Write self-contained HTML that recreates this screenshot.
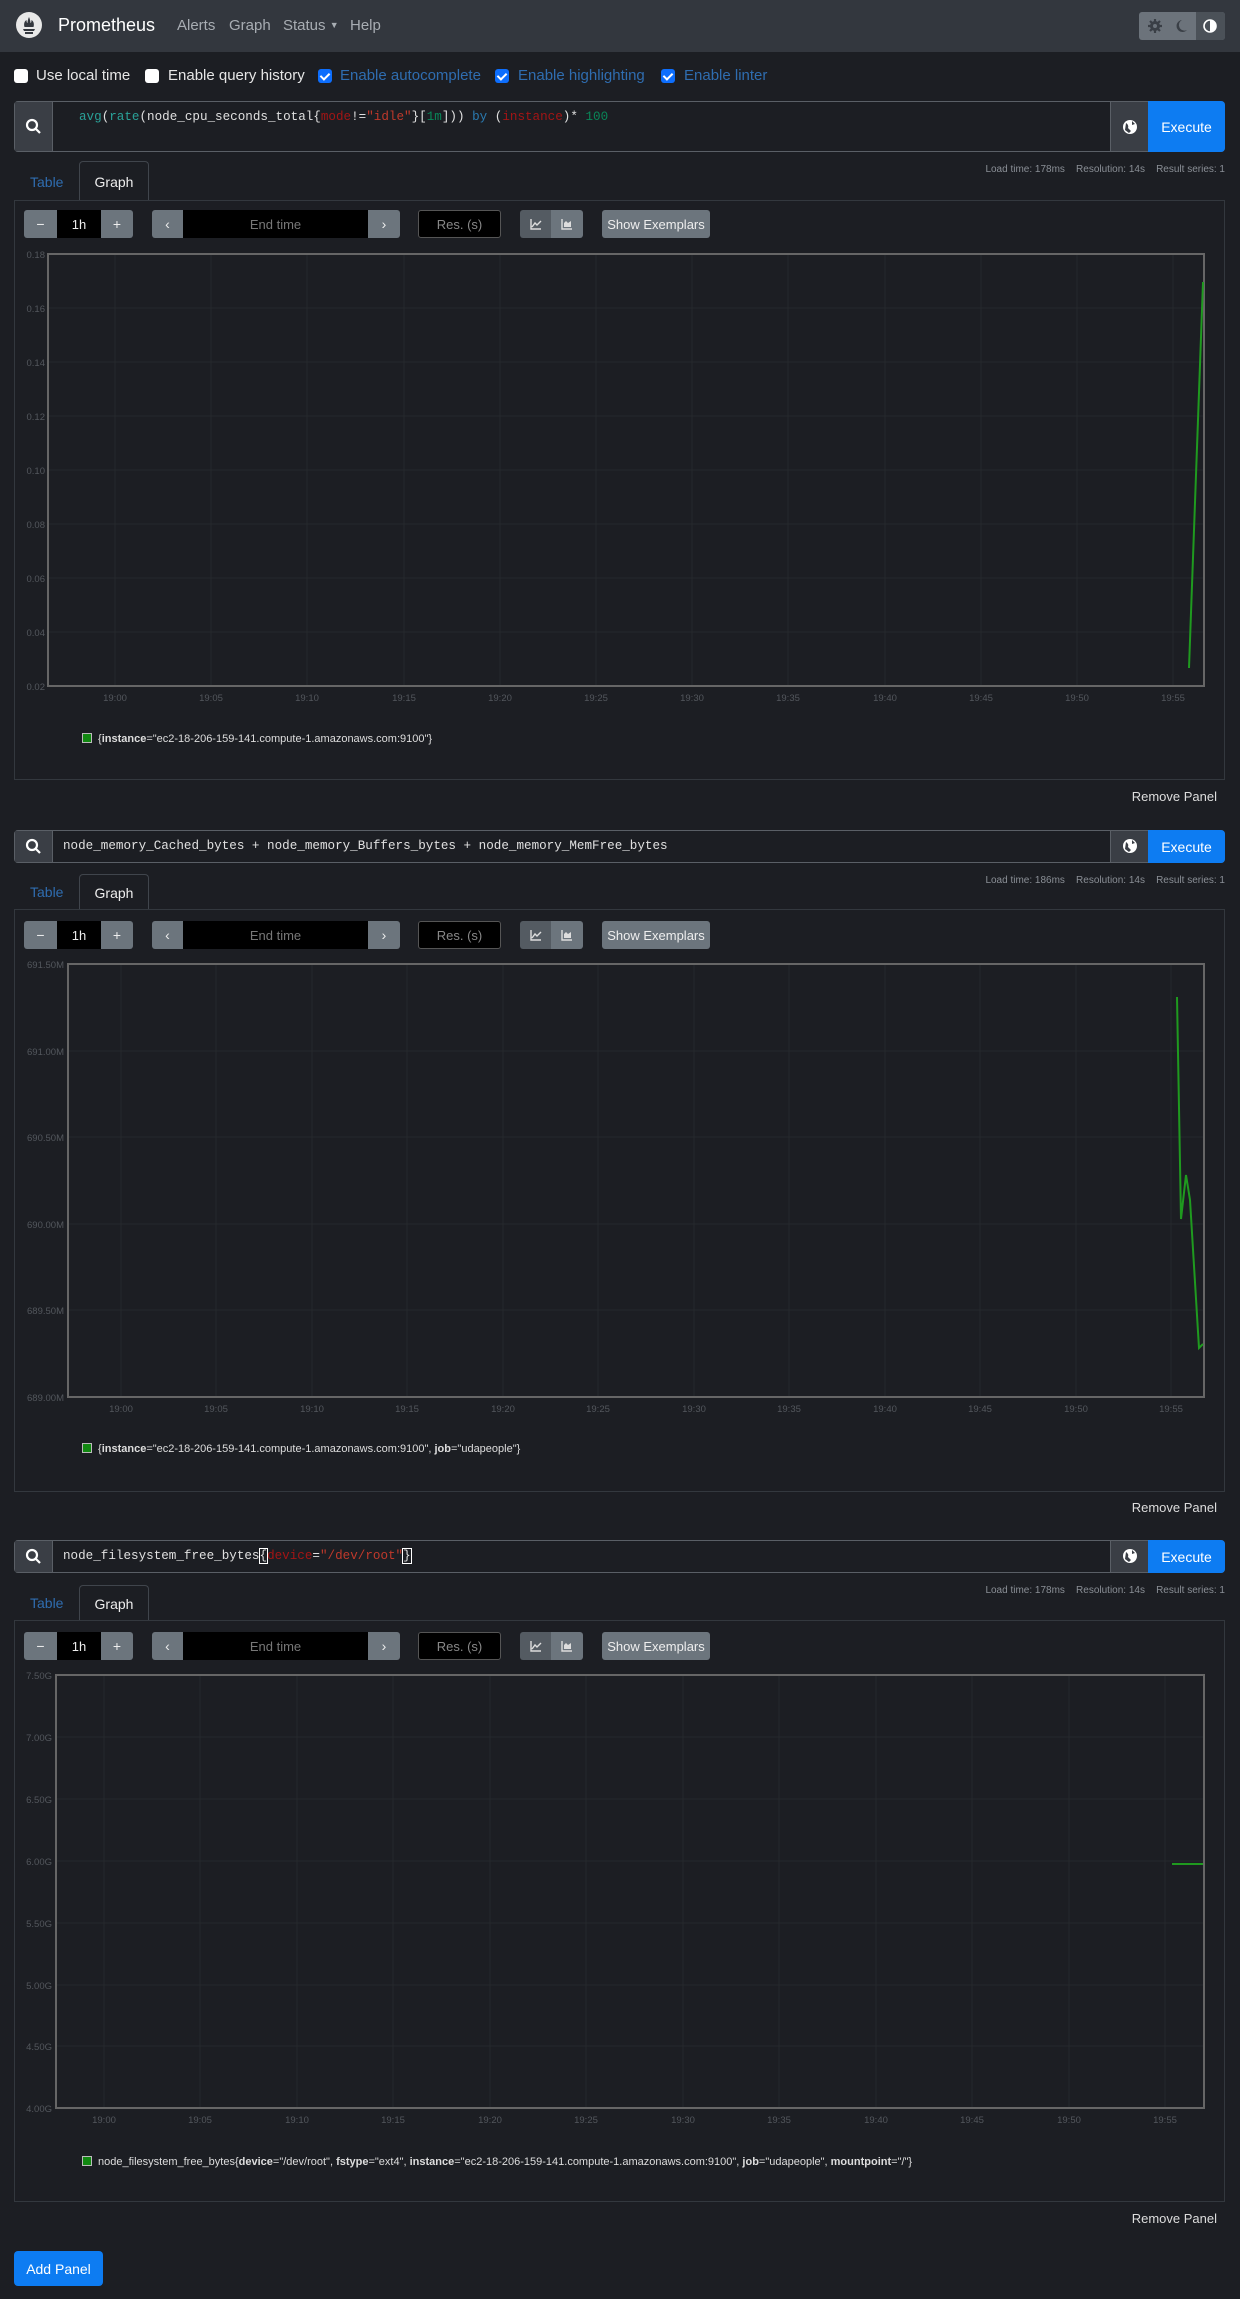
<!DOCTYPE html>
<html><head><meta charset="utf-8"><style>
*{box-sizing:border-box;margin:0;padding:0}
body{width:1240px;height:2299px;background:#1c1e23;font-family:"Liberation Sans",sans-serif;color:#ddd;position:relative;overflow:hidden}
.a{position:absolute}
.nav{left:0;top:0;width:1240px;height:52px;background:#33373e}
.cb{width:14px;height:14px;border-radius:3px;background:#fff;top:69px}
.cbc{background:#0d6efd}
.cbc:after{content:"";position:absolute;left:4px;top:2px;width:4px;height:7px;border:solid #fff;border-width:0 2px 2px 0;transform:rotate(45deg)}
.lbl{top:67px;font-size:15px;color:#e6e6e6}
.lblb{color:#2f6db0}
.q{left:14px;width:1211px;border:1px solid #5a5f66;border-radius:4px;background:#1c1e23}
.qs{left:0;top:0;bottom:0;width:38px;background:#3a3e45;border-right:1px solid #5a5f66}
.qg{right:76px;top:0;bottom:0;width:38px;background:#3a3e45;border-left:1px solid #5a5f66}
.qe{right:-1px;top:-1px;bottom:-1px;width:77px;background:#0d7cf2;border-radius:0 4px 4px 0;color:#fff;font-size:14px;display:flex;align-items:center;justify-content:center}
.code{font-family:"Liberation Mono",monospace;font-size:12.6px;color:#e0e0e0;white-space:pre}
.tab{font-size:14px}
.gt{left:79px;width:70px;border:1px solid #40454c;border-bottom:none;border-radius:4px 4px 0 0;background:#1c1e23;color:#eee;text-align:center}
.box{left:14px;width:1211px;border:1px solid #33383e}
.stats{right:15px;font-size:10px;color:#8a8f96}
.btn{background:#6c757d;color:#eee;font-size:14px;display:flex;align-items:center;justify-content:center;height:28px}
.blk{background:#000;color:#eee;font-size:13px;display:flex;align-items:center;justify-content:center;height:28px}
.rm{right:23px;font-size:13px;color:#ddd}
.leg{left:82px;font-size:11px;color:#ddd;white-space:nowrap}
.leg i{display:inline-block;width:10px;height:10px;background:#118811;border:1px solid #bbb;margin-right:6px;vertical-align:-1px}
</style></head><body>
<div class="a nav"></div>
<svg class="a" style="left:15px;top:11px" width="28" height="28" viewBox="0 0 28 28"><circle cx="14" cy="14" r="13" fill="#e8e8e8"/><path d="M8 18h12l-1 2H9z M9.5 16c-1-3 0-6 2-7 0 2 .5 3 1 3 0-2 1-5 1.5-6 .5 1 1.5 4 1.5 6 .5 0 1-1 1-3 2 1 3 4 2 7z M10 21h8v2h-8z" fill="#33373e"/></svg>
<div class="a" style="left:58px;top:15px;font-size:18px;color:#fff">Prometheus</div>
<div class="a" style="left:177px;top:17px;font-size:15px;color:#a8adb3">Alerts</div>
<div class="a" style="left:229px;top:17px;font-size:15px;color:#a8adb3">Graph</div>
<div class="a" style="left:283px;top:17px;font-size:15px;color:#a8adb3">Status <span style="font-size:9px;vertical-align:2px">▼</span></div>
<div class="a" style="left:350px;top:17px;font-size:15px;color:#a8adb3">Help</div>
<div class="a" style="left:1139px;top:12px;width:86px;height:28px;background:#6c737b;border-radius:3px"></div>
<div class="a" style="left:1196px;top:12px;width:29px;height:28px;background:#4b5158;border-radius:0 3px 3px 0"></div>
<svg class="a" style="left:1139px;top:12px" width="57" height="28">
<g fill="#3a3f46"><circle cx="16" cy="14" r="5"/><g stroke="#3a3f46" stroke-width="2.2"><path d="M16 7v14M9 14h14M11 9l10 10M21 9L11 19"/></g><circle cx="16" cy="14" r="2" fill="#6c737b"/>
<path d="M43 8a6 6 0 1 0 5 10a5 5 0 0 1-5-10z"/></g></svg>
<svg class="a" style="left:1203px;top:19px" width="14" height="14"><circle cx="7" cy="7" r="6" fill="none" stroke="#fff" stroke-width="1.6"/><path d="M7 1a6 6 0 0 1 0 12z" fill="#fff"/></svg>

<div class="a cb" style="left:14px"></div><div class="a lbl" style="left:36px">Use local time</div>
<div class="a cb" style="left:145px"></div><div class="a lbl" style="left:168px">Enable query history</div>
<div class="a cb cbc" style="left:318px"></div><div class="a lbl lblb" style="left:340px">Enable autocomplete</div>
<div class="a cb cbc" style="left:495px"></div><div class="a lbl lblb" style="left:518px">Enable highlighting</div>
<div class="a cb cbc" style="left:661px"></div><div class="a lbl lblb" style="left:684px">Enable linter</div>

<!-- Panel 1 -->
<div class="a q" style="top:101px;height:51px"><div class="a qs"></div><div class="a qg"></div><div class="a qe">Execute</div>
<div class="a code" style="left:64px;top:8px"><span style="color:#2aa198">avg</span>(<span style="color:#2aa198">rate</span>(node_cpu_seconds_total{<span style="color:#a31515">mode</span>!=<span style="color:#c0392b">"idle"</span>}[<span style="color:#098658">1m</span>])) <span style="color:#2a7ab0">by</span> (<span style="color:#a31515">instance</span>)* <span style="color:#098658">100</span></div></div>
<div class="a stats" style="top:164px">Load time: 178ms &nbsp; &nbsp;Resolution: 14s &nbsp; &nbsp;Result series: 1</div>
<div class="a tab" style="left:30px;top:174px;color:#2f6db0">Table</div>
<div class="a tab gt" style="top:161px;height:40px;padding-top:12px">Graph</div>
<div class="a box" style="top:200px;height:580px"></div>
<div class="a rm" style="top:789px">Remove Panel</div>

<!-- Panel 2 -->
<div class="a q" style="top:830px;height:33px"><div class="a qs"></div><div class="a qg"></div><div class="a qe">Execute</div>
<div class="a code" style="left:48px;top:8px">node_memory_Cached_bytes + node_memory_Buffers_bytes + node_memory_MemFree_bytes</div></div>
<div class="a stats" style="top:875px">Load time: 186ms &nbsp; &nbsp;Resolution: 14s &nbsp; &nbsp;Result series: 1</div>
<div class="a tab" style="left:30px;top:884px;color:#2f6db0">Table</div>
<div class="a tab gt" style="top:874px;height:36px;padding-top:10px">Graph</div>
<div class="a box" style="top:909px;height:583px"></div>
<div class="a rm" style="top:1500px">Remove Panel</div>

<!-- Panel 3 -->
<div class="a q" style="top:1540px;height:33px"><div class="a qs"></div><div class="a qg"></div><div class="a qe">Execute</div>
<div class="a code" style="left:48px;top:8px">node_filesystem_free_bytes<span style="outline:1px solid #fff">{</span><span style="color:#a31515">device</span>=<span style="color:#c0392b">"/dev/root"</span><span style="outline:1px solid #fff">}</span></div></div>
<div class="a stats" style="top:1585px">Load time: 178ms &nbsp; &nbsp;Resolution: 14s &nbsp; &nbsp;Result series: 1</div>
<div class="a tab" style="left:30px;top:1595px;color:#2f6db0">Table</div>
<div class="a tab gt" style="top:1585px;height:36px;padding-top:10px">Graph</div>
<div class="a box" style="top:1620px;height:582px"></div>
<div class="a rm" style="top:2211px">Remove Panel</div>

<div class="a" style="left:14px;top:2251px;width:89px;height:35px;background:#0d7cf2;border-radius:4px;color:#fff;font-size:14px;display:flex;align-items:center;justify-content:center">Add Panel</div>

<!-- controls -->
<div class="a" style="left:0;top:210px;width:1240px;height:28px">
<div class="a btn" style="left:24px;width:33px;border-radius:3px 0 0 3px">−</div><div class="a blk" style="left:57px;width:44px">1h</div><div class="a btn" style="left:101px;width:32px;border-radius:0 3px 3px 0">+</div>
<div class="a btn" style="left:152px;width:31px;border-radius:3px 0 0 3px">‹</div><div class="a blk" style="left:183px;width:185px;color:#777">End time</div><div class="a btn" style="left:368px;width:32px;border-radius:0 3px 3px 0">›</div>
<div class="a blk" style="left:418px;width:83px;border:1px solid #555;border-radius:3px;color:#888">Res. (s)</div>
<div class="a btn" style="left:520px;width:31px;background:#545b62;border-radius:3px 0 0 3px"><svg width="12" height="12"><path d="M1 1v10h10M2 9l3-4 2 2 4-4" fill="none" stroke="#ddd" stroke-width="1.4"/></svg></div><div class="a btn" style="left:551px;width:32px;border-radius:0 3px 3px 0"><svg width="12" height="12"><path d="M1 1v10h10" fill="none" stroke="#ddd" stroke-width="1.4"/><path d="M3 9V5l2-2 2 2 3-2v6z" fill="#ddd"/></svg></div>
<div class="a btn" style="left:602px;width:108px;border-radius:3px;font-size:13px">Show Exemplars</div></div>
<div class="a" style="left:0;top:921px;width:1240px;height:28px">
<div class="a btn" style="left:24px;width:33px;border-radius:3px 0 0 3px">−</div><div class="a blk" style="left:57px;width:44px">1h</div><div class="a btn" style="left:101px;width:32px;border-radius:0 3px 3px 0">+</div>
<div class="a btn" style="left:152px;width:31px;border-radius:3px 0 0 3px">‹</div><div class="a blk" style="left:183px;width:185px;color:#777">End time</div><div class="a btn" style="left:368px;width:32px;border-radius:0 3px 3px 0">›</div>
<div class="a blk" style="left:418px;width:83px;border:1px solid #555;border-radius:3px;color:#888">Res. (s)</div>
<div class="a btn" style="left:520px;width:31px;background:#545b62;border-radius:3px 0 0 3px"><svg width="12" height="12"><path d="M1 1v10h10M2 9l3-4 2 2 4-4" fill="none" stroke="#ddd" stroke-width="1.4"/></svg></div><div class="a btn" style="left:551px;width:32px;border-radius:0 3px 3px 0"><svg width="12" height="12"><path d="M1 1v10h10" fill="none" stroke="#ddd" stroke-width="1.4"/><path d="M3 9V5l2-2 2 2 3-2v6z" fill="#ddd"/></svg></div>
<div class="a btn" style="left:602px;width:108px;border-radius:3px;font-size:13px">Show Exemplars</div></div>
<div class="a" style="left:0;top:1632px;width:1240px;height:28px">
<div class="a btn" style="left:24px;width:33px;border-radius:3px 0 0 3px">−</div><div class="a blk" style="left:57px;width:44px">1h</div><div class="a btn" style="left:101px;width:32px;border-radius:0 3px 3px 0">+</div>
<div class="a btn" style="left:152px;width:31px;border-radius:3px 0 0 3px">‹</div><div class="a blk" style="left:183px;width:185px;color:#777">End time</div><div class="a btn" style="left:368px;width:32px;border-radius:0 3px 3px 0">›</div>
<div class="a blk" style="left:418px;width:83px;border:1px solid #555;border-radius:3px;color:#888">Res. (s)</div>
<div class="a btn" style="left:520px;width:31px;background:#545b62;border-radius:3px 0 0 3px"><svg width="12" height="12"><path d="M1 1v10h10M2 9l3-4 2 2 4-4" fill="none" stroke="#ddd" stroke-width="1.4"/></svg></div><div class="a btn" style="left:551px;width:32px;border-radius:0 3px 3px 0"><svg width="12" height="12"><path d="M1 1v10h10" fill="none" stroke="#ddd" stroke-width="1.4"/><path d="M3 9V5l2-2 2 2 3-2v6z" fill="#ddd"/></svg></div>
<div class="a btn" style="left:602px;width:108px;border-radius:3px;font-size:13px">Show Exemplars</div></div>

<svg class="a" style="left:0;top:0" width="1240" height="2299" pointer-events="none">
<g fill="none" stroke="#fff" stroke-width="2.2">
<circle cx="32" cy="125" r="5"/><path d="M36 129l4 4"/>
<circle cx="32" cy="845" r="5"/><path d="M36 849l4 4"/>
<circle cx="32" cy="1555" r="5"/><path d="M36 1559l4 4"/></g>
<g fill="#fff"><circle cx="1130" cy="127" r="7"/><circle cx="1130" cy="846" r="7"/><circle cx="1130" cy="1556" r="7"/></g>
<g fill="#3a3e45"><path d="M1126 123q3 2 2 5l3 3-2 2-4-3z M1132 121l3 3-3 1z"/><path d="M1126 842q3 2 2 5l3 3-2 2-4-3z M1132 840l3 3-3 1z"/><path d="M1126 1552q3 2 2 5l3 3-2 2-4-3z M1132 1550l3 3-3 1z"/></g>

<g font-family="Liberation Sans" font-size="9.5" fill="#53575d">
<g stroke="#25282d" stroke-width="1">
<path d="M48 308H1204M48 362H1204M48 416H1204M48 470H1204M48 524H1204M48 578H1204M48 632H1204"/>
<path d="M115 254V686M211 254V686M307 254V686M404 254V686M500 254V686M596 254V686M692 254V686M788 254V686M885 254V686M981 254V686M1077 254V686M1173 254V686"/></g>
<rect x="48" y="254" width="1156" height="432" fill="none" stroke="#666" stroke-width="2"/>
<g text-anchor="end"><text x="45" y="258">0.18</text><text x="45" y="312">0.16</text><text x="45" y="366">0.14</text><text x="45" y="420">0.12</text><text x="45" y="474">0.10</text><text x="45" y="528">0.08</text><text x="45" y="582">0.06</text><text x="45" y="636">0.04</text><text x="45" y="690">0.02</text></g>
<g text-anchor="middle"><text x="115" y="701">19:00</text><text x="211" y="701">19:05</text><text x="307" y="701">19:10</text><text x="404" y="701">19:15</text><text x="500" y="701">19:20</text><text x="596" y="701">19:25</text><text x="692" y="701">19:30</text><text x="788" y="701">19:35</text><text x="885" y="701">19:40</text><text x="981" y="701">19:45</text><text x="1077" y="701">19:50</text><text x="1173" y="701">19:55</text></g>
<g stroke="#25282d" stroke-width="1">
<path d="M68 1051H1204M68 1137H1204M68 1224H1204M68 1310H1204"/>
<path d="M121 964V1397M216 964V1397M312 964V1397M407 964V1397M503 964V1397M598 964V1397M694 964V1397M789 964V1397M885 964V1397M980 964V1397M1076 964V1397M1171 964V1397"/></g>
<rect x="68" y="964" width="1136" height="433" fill="none" stroke="#666" stroke-width="2"/>
<g text-anchor="end"><text x="64" y="968">691.50M</text><text x="64" y="1055">691.00M</text><text x="64" y="1141">690.50M</text><text x="64" y="1228">690.00M</text><text x="64" y="1314">689.50M</text><text x="64" y="1401">689.00M</text></g>
<g text-anchor="middle"><text x="121" y="1412">19:00</text><text x="216" y="1412">19:05</text><text x="312" y="1412">19:10</text><text x="407" y="1412">19:15</text><text x="503" y="1412">19:20</text><text x="598" y="1412">19:25</text><text x="694" y="1412">19:30</text><text x="789" y="1412">19:35</text><text x="885" y="1412">19:40</text><text x="980" y="1412">19:45</text><text x="1076" y="1412">19:50</text><text x="1171" y="1412">19:55</text></g>
<g stroke="#25282d" stroke-width="1">
<path d="M56 1737H1204M56 1799H1204M56 1861H1204M56 1923H1204M56 1985H1204M56 2046H1204"/>
<path d="M104 1675V2108M200 1675V2108M297 1675V2108M393 1675V2108M490 1675V2108M586 1675V2108M683 1675V2108M779 1675V2108M876 1675V2108M972 1675V2108M1069 1675V2108M1165 1675V2108"/></g>
<rect x="56" y="1675" width="1148" height="433" fill="none" stroke="#666" stroke-width="2"/>
<g text-anchor="end"><text x="52" y="1679">7.50G</text><text x="52" y="1741">7.00G</text><text x="52" y="1803">6.50G</text><text x="52" y="1865">6.00G</text><text x="52" y="1927">5.50G</text><text x="52" y="1989">5.00G</text><text x="52" y="2050">4.50G</text><text x="52" y="2112">4.00G</text></g>
<g text-anchor="middle"><text x="104" y="2123">19:00</text><text x="200" y="2123">19:05</text><text x="297" y="2123">19:10</text><text x="393" y="2123">19:15</text><text x="490" y="2123">19:20</text><text x="586" y="2123">19:25</text><text x="683" y="2123">19:30</text><text x="779" y="2123">19:35</text><text x="876" y="2123">19:40</text><text x="972" y="2123">19:45</text><text x="1069" y="2123">19:50</text><text x="1165" y="2123">19:55</text></g>
</g>
<g fill="none" stroke="#1f9a1f" stroke-width="2">
<path d="M1189 668L1203 282"/>
<path d="M1177 997L1181 1219L1186 1175L1190 1200L1199 1348L1203 1344"/>
<path d="M1172 1864H1203"/></g>
</svg>

<div class="a leg" style="top:733px"><i></i>{<b>instance</b>="ec2-18-206-159-141.compute-1.amazonaws.com:9100"}</div>
<div class="a leg" style="top:1443px"><i></i>{<b>instance</b>="ec2-18-206-159-141.compute-1.amazonaws.com:9100", <b>job</b>="udapeople"}</div>
<div class="a leg" style="top:2156px"><i></i>node_filesystem_free_bytes{<b>device</b>="/dev/root", <b>fstype</b>="ext4", <b>instance</b>="ec2-18-206-159-141.compute-1.amazonaws.com:9100", <b>job</b>="udapeople", <b>mountpoint</b>="/"}</div>
</body></html>
